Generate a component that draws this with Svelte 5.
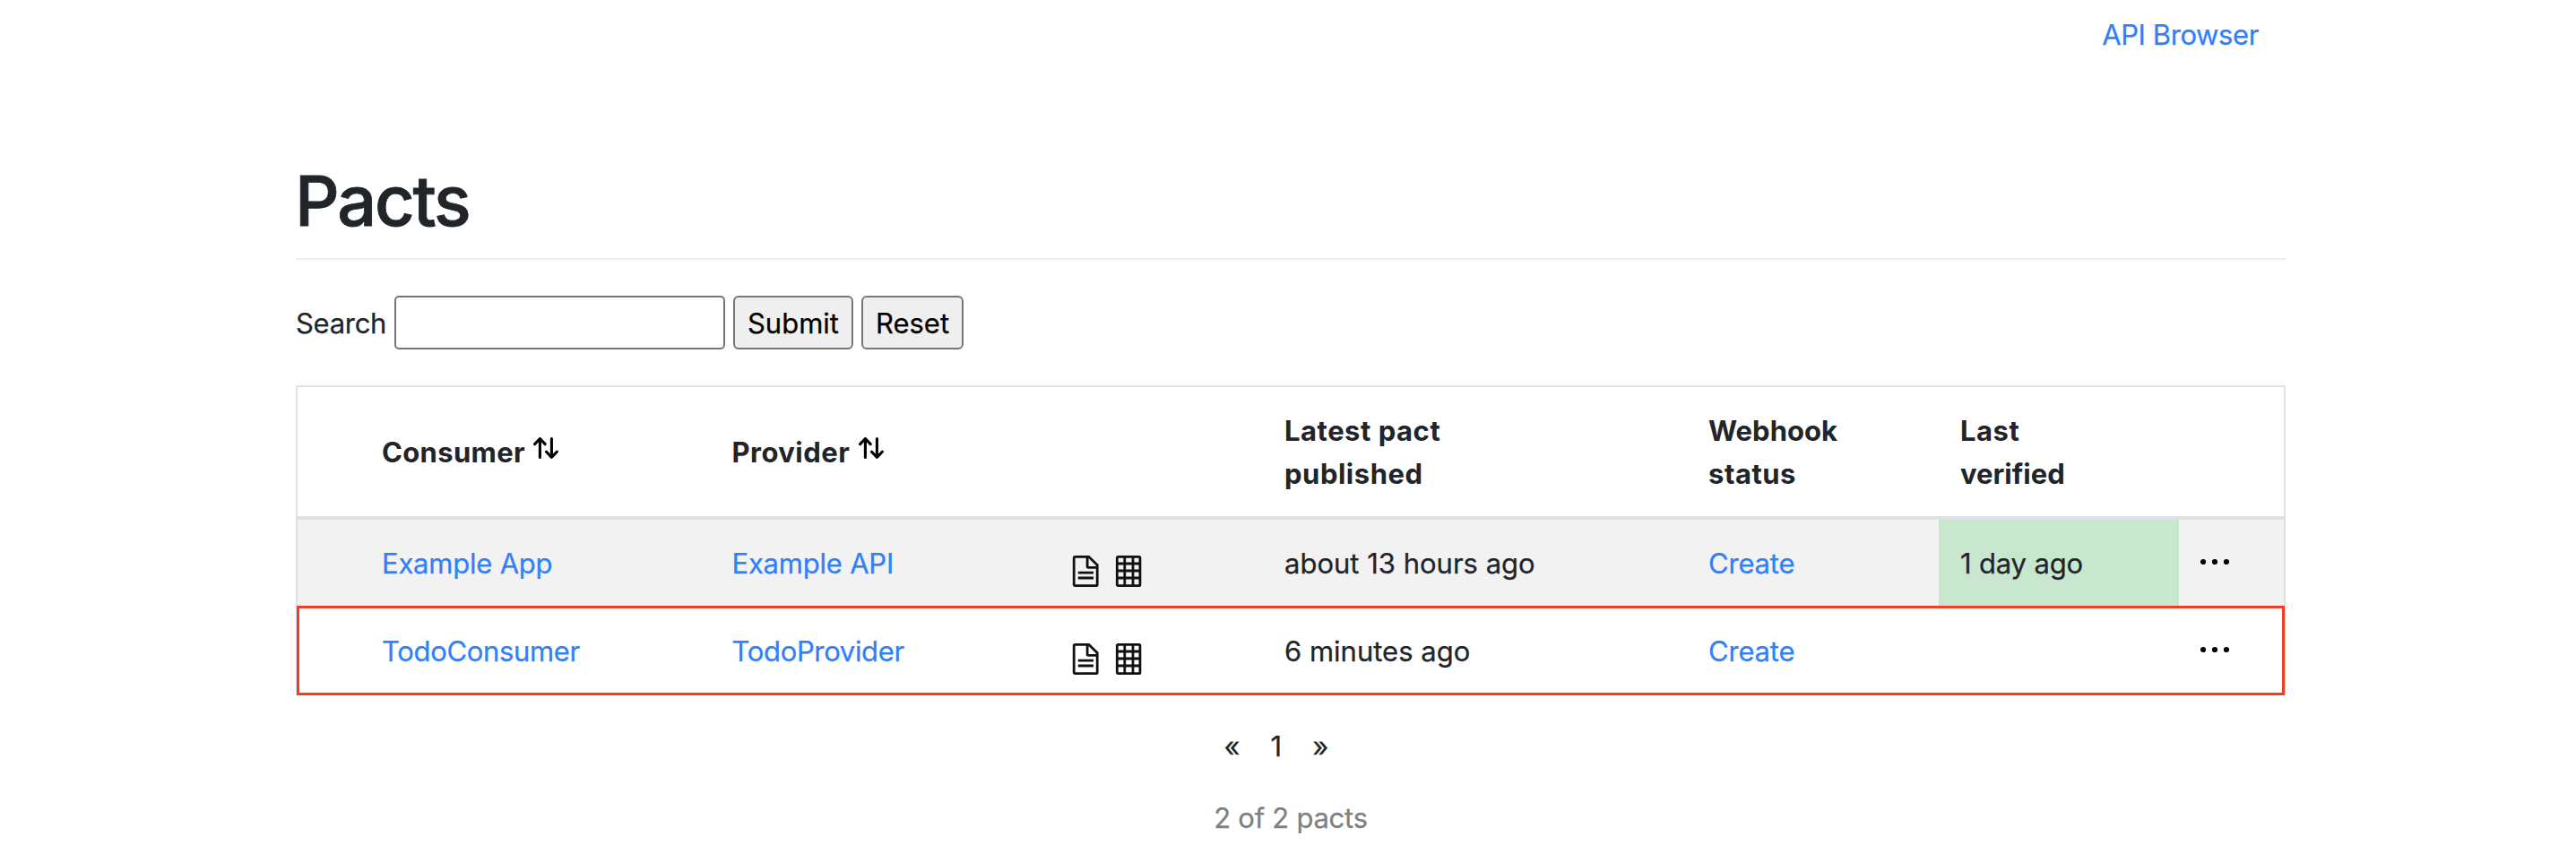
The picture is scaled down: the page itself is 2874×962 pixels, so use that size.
<script>
  const pacts = [
    { consumer: 'Example App', provider: 'Example API', published: 'about 13 hours ago', webhook: 'Create', verified: '1 day ago', striped: true },
    { consumer: 'TodoConsumer', provider: 'TodoProvider', published: '6 minutes ago', webhook: 'Create', verified: '', tight: true, selected: true }
  ];
</script>

{#snippet sortIcon()}
  <svg class="sort" width="29" height="26" viewBox="0 0 29 26" fill="none" stroke="#000" stroke-width="3.1" stroke-linecap="round" stroke-linejoin="round">
    <path d="M7.4 23.5V2.8M1.6 8.6l5.8-6.1 5.8 6.1" />
    <path d="M20.4 2.5v20.7M14.6 17.2l5.8 6.2 5.9-6.2" />
  </svg>
{/snippet}

<div class="page">
  <nav><a href="#browser">API Browser</a></nav>

  <h1>Pacts</h1>

  <form onsubmit={(e) => e.preventDefault()}>
    <label for="search">Search</label>
    <input id="search" type="text" />
    <button class="submit" type="submit">Submit</button>
    <button class="reset" type="reset">Reset</button>
  </form>

  <div class="table" role="table">
    <div class="row head" role="row">
      <div></div>
      <div class="cell consumer"><span>Consumer</span>{@render sortIcon()}</div>
      <div class="cell provider"><span>Provider</span>{@render sortIcon()}</div>
      <div></div>
      <div class="cell wide">Latest pact<br />published</div>
      <div class="cell"><div><span class="webhook">Webhook</span><br /><span class="wide">status</span></div></div>
      <div class="cell"><div><span class="wide">Last</span><br />verified</div></div>
      <div></div>
    </div>
    {#each pacts as pact}
      <div class="row" class:striped={pact.striped} role="row">
        <div></div>
        <div class="cell link" class:tight={pact.tight}><a href="#consumer">{pact.consumer}</a></div>
        <div class="cell link" class:tight={pact.tight}><a href="#provider">{pact.provider}</a></div>
        <div class="icons">
          <svg width="31" height="37" viewBox="0 0 31 37" fill="none" stroke="#111" stroke-width="2.8" stroke-linejoin="round">
            <path d="M3.4 2.3h15.2l9.6 9.3v21.6q0 1.4-1.4 1.4H3.6q-1.4 0-1.4-1.4V3.7q0-1.4 1.4-1.4z" />
            <path d="M17.1 2.3v10.8q0 1.2 1.2 1.2h10" />
            <path d="M6.8 20.1h17.2M6.8 26h17.2" />
          </svg>
          <svg width="30" height="37" viewBox="0 0 30 37" fill="none" stroke="#111" stroke-width="2.8">
            <rect x="2.3" y="2.3" width="25.6" height="32.3" rx="1.2" />
            <path d="M10.8 2v33M20 2v33M2 10h26M2 18h26M2 26h26" />
          </svg>
        </div>
        <div class="cell">{pact.published}</div>
        <div class="cell create"><a href="#webhook">{pact.webhook}</a></div>
        <div class="cell" class:success={pact.verified}>{pact.verified}</div>
        <div class="cell">
          <svg class="dots" width="32" height="8" viewBox="0 0 32 8"><circle cx="3" cy="4" r="3.1" /><circle cx="16" cy="4" r="3.1" /><circle cx="29" cy="4" r="3.1" /></svg>
        </div>
        {#if pact.selected}<div class="selection"></div>{/if}
      </div>
    {/each}
  </div>

  <div class="pagination"><span>«</span><span>1</span><span>»</span></div>
  <p class="summary">2 of 2 pacts</p>
</div>

<style>
  :global(body) { background: #fff; }
  .page {
    box-sizing: border-box;
    width: 2874px;
    height: 962px;
    overflow: hidden;
    padding: 0 324px 0 330px;
    color: #212529;
    font: 400 31px/48px Inter, sans-serif;
    -webkit-text-stroke: 0.25px currentColor;
  }
  a { color: #2f80fb; text-decoration: none; }
  nav {
    box-sizing: border-box;
    height: 176px;
    padding: 15px 30px 0 0;
    text-align: right;
    letter-spacing: -0.4px;
  }
  h1 {
    box-sizing: border-box;
    height: 114px;
    margin: 0;
    border-bottom: 2px solid #eee;
    font-size: 77.5px;
    font-weight: 500;
    line-height: 96px;
    letter-spacing: -2.2px;
    text-indent: -1px;
    -webkit-text-stroke: 0.8px currentColor;
  }
  form { display: flex; height: 60px; margin-top: 40px; }
  label { width: 109.5px; line-height: 61px; letter-spacing: -0.3px; }
  input, button {
    box-sizing: border-box;
    height: 60px;
    margin: 0;
    border: 2px solid #767676;
    border-radius: 6px;
    font: inherit;
  }
  input { width: 369px; margin-right: 9.5px; background: #fff; border-radius: 5px; }
  button { padding: 1px 0 0; background: #efefef; color: #000; }
  .submit { width: 134px; margin-right: 9px; }
  .reset { width: 114px; }
  .table { margin-top: 40px; border: 2px solid #dee2e6; border-bottom: 0; }
  .row {
    display: grid;
    grid-template-columns: 70px 390.5px 376.5px 240px 473px 281px 268px 117px;
    position: relative;
    height: 98px;
  }
  .head {
    height: 144px;
    border-bottom: 4px solid #dee2e6;
    font-weight: 700;
    -webkit-text-stroke: 0;
  }
  .head .cell { padding-top: 1px; }
  .striped { background: #f2f2f2; }
  .cell { display: flex; align-items: center; padding: 0 24px; }
  .consumer { letter-spacing: 0.33px; }
  .provider { letter-spacing: 0.47px; }
  .wide { letter-spacing: 0.52px; }
  .webhook { letter-spacing: 0; }
  .link { letter-spacing: -0.22px; }
  .link.tight { letter-spacing: -0.34px; }
  .create { letter-spacing: -0.2px; }
  .success { background: #c9e6cf; letter-spacing: -0.16px; }
  .sort { margin: -9px 0 0 9.5px; }
  .icons { display: flex; gap: 17px; padding: 39px 0 0 27px; }
  .dots { margin-top: -4px; }
  .selection {
    position: absolute;
    inset: -2px -1px 0 -1px;
    border: 3px solid #ee3e26;
  }
  .pagination { display: flex; gap: 34px; margin-top: 33px; padding-left: 1035.5px; }
  .summary { margin: 32px 0 0; text-align: center; color: #808080; letter-spacing: -0.26px; }
</style>
